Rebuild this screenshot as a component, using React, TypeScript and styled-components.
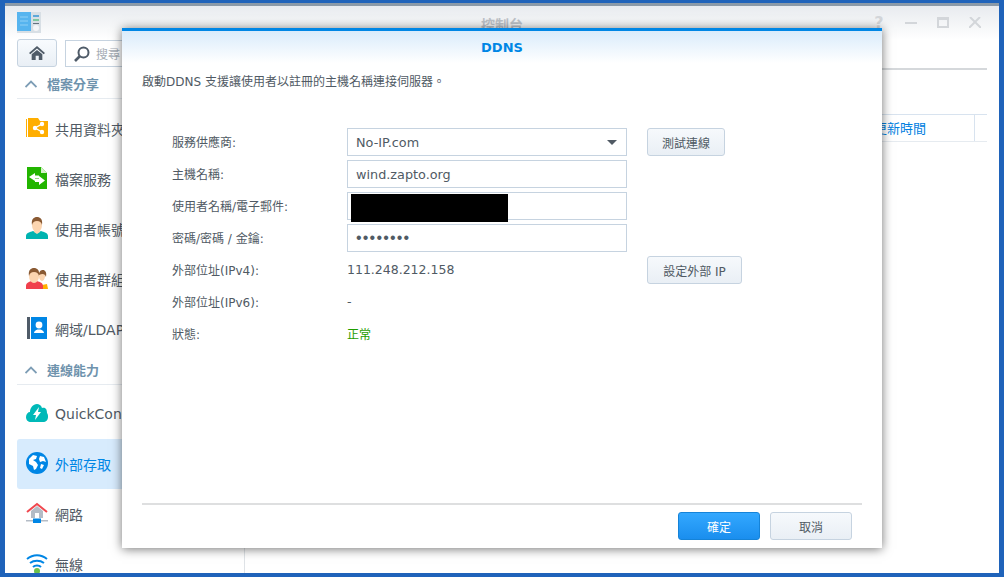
import React from "react";
import styled, { createGlobalStyle } from "styled-components";

const FONT = `"DejaVu Sans", "Noto Sans CJK TC", sans-serif`;

const GlobalStyle = createGlobalStyle`
	html, body {
		margin: 0;
		padding: 0;
		height: 100%;
		overflow: hidden;
	}
	* {
		box-sizing: border-box;
	}
`;

const Desktop = styled.div`
	position: relative;
	width: 1004px;
	height: 577px;
	padding: 3px 5px 4px;
	background-color: #1f63ba;
	font-family: ${FONT};
	font-size: 13px;
	color: #505a64;
`;

const Window = styled.div`
	display: flex;
	flex-direction: column;
	height: 100%;
	overflow: hidden;
	border-top: 3px solid #8b9aa8;
	background: linear-gradient(#e8ebef 0, #ffffff 34px);
`;

const TitleBar = styled.div`
	display: grid;
	grid-template-columns: 1fr auto 1fr;
	align-items: center;
	flex: none;
	height: 33px;
	padding: 0 18px 0 12px;
`;

const WindowTitle = styled.div`
	margin-left: 6px;
	padding-top: 2px;
	font-size: 14px;
	font-weight: 700;
	color: #bcc1c7;
`;

const Controls = styled.div`
	display: flex;
	justify-content: flex-end;
	align-items: center;
	gap: 20px;
	color: #d3d6da;
`;

const HelpMark = styled.span`
	width: 12px;
	font-size: 16px;
	font-weight: 700;
	line-height: 14px;
	text-align: center;
`;

const Body = styled.div`
	display: flex;
	flex: 1;
	min-height: 0;
`;

const Sidebar = styled.div`
	flex: none;
	width: 240px;
	padding: 0 12px;
	border-right: 1px solid #dfe3e7;
`;

const Toolbar = styled.div`
	display: flex;
	gap: 8px;
	height: 28px;
`;

const HomeButton = styled.div`
	display: flex;
	align-items: center;
	justify-content: center;
	flex: none;
	width: 40px;
	border: 1px solid #c6d3e0;
	border-radius: 3px;
	background: linear-gradient(#f8fbfe, #e9eff5);
`;

const SearchBox = styled.div`
	display: flex;
	align-items: center;
	gap: 6px;
	flex: 1;
	margin-top: 1px;
	padding-left: 8px;
	border: 1px solid #c6d3e0;
	background: #fff;
	font-size: 12px;
	color: #a6adb5;
`;

const SectionHeader = styled.div<{ $top: number }>`
	display: flex;
	align-items: center;
	gap: 10px;
	height: 28px;
	margin-top: ${(props) => props.$top}px;
	padding: 0 0 2px 8px;
	border-bottom: 1px solid #e6ebf0;
	font-weight: 700;
	color: #6f93ad;
`;

const NavList = styled.div<{ $top: number }>`
	display: flex;
	flex-direction: column;
	margin-top: ${(props) => props.$top}px;
`;

const NavItem = styled.div<{ $active?: boolean }>`
	display: flex;
	align-items: center;
	gap: 7px;
	height: 50px;
	padding-left: 9px;
	border-radius: 3px;
	font-size: 14px;
	white-space: nowrap;
	overflow: hidden;
	color: ${(props) => (props.$active ? "#0086e5" : "#505a64")};
	background: ${(props) => (props.$active ? "#d7ebfd" : "transparent")};
`;

const Main = styled.div`
	flex: 1;
	margin-right: 12px;
`;

const Tabs = styled.div`
	height: 31px;
	border-bottom: 2px solid #d5d8db;
`;

const TableHead = styled.div`
	display: flex;
	justify-content: flex-end;
	height: 28px;
	margin-top: 44px;
	border-top: 1px solid #d8e3ef;
	border-bottom: 1px solid #e6ebf0;
	color: #0080df;
`;

const HeadCell = styled.div`
	display: flex;
	align-items: center;
	width: 102px;
	padding: 0 0 2px 1px;
	border-right: 1px solid #d8e3ef;
`;

const HeadEnd = styled.div`
	width: 12px;
`;

const Dialog = styled.div`
	position: absolute;
	top: 28px;
	left: 122px;
	display: flex;
	flex-direction: column;
	width: 760px;
	height: 520px;
	border-top: 3px solid #0086e5;
	background: #fff;
	box-shadow: 0 1px 10px rgba(0, 0, 0, 0.55);
`;

const DialogHeader = styled.div`
	display: flex;
	align-items: center;
	justify-content: center;
	flex: none;
	height: 32px;
	background: linear-gradient(#d9ebfb, #ffffff);
	font-weight: 700;
	color: #0086e5;
`;

const DialogBody = styled.div`
	flex: 1;
	padding: 10px 20px 0;
`;

const Description = styled.div`
	line-height: 18px;
	font-size: 12px;
`;

const Form = styled.div`
	display: grid;
	grid-template-columns: 175px 280px auto;
	grid-auto-rows: 28px;
	row-gap: 4px;
	align-items: center;
	justify-items: start;
	margin-top: 37px;
	padding-left: 30px;
`;

const Label = styled.div`
	grid-column: 1;
	padding-bottom: 2px;
	font-size: 12px;
`;

const Field = styled.div`
	position: relative;
	display: flex;
	align-items: center;
	justify-content: space-between;
	width: 100%;
	height: 100%;
	padding: 0 9px 0 8px;
	border: 1px solid #c6d3e0;
	background: #fff;
	font-size: 12.8px;
`;

const Redaction = styled.div`
	position: absolute;
	top: 1px;
	left: 3px;
	width: 157px;
	height: 28px;
	background: #000;
`;

const Secret = styled.span`
	font-family: "Liberation Sans", sans-serif;
	font-size: 16px;
	letter-spacing: 1.2px;
`;

const Caret = styled.span`
	width: 0;
	height: 0;
	border-left: 5px solid transparent;
	border-right: 5px solid transparent;
	border-top: 5px solid #505a64;
`;

const Value = styled.div<{ $ok?: boolean }>`
	grid-column: 2;
	padding-bottom: 2px;
	font-size: ${(props) => (props.$ok ? 12 : 12.5)}px;
	color: ${(props) => (props.$ok ? "#1f9d00" : "#505a64")};
`;

const Button = styled.div<{ $primary?: boolean; $width: number }>`
	display: flex;
	align-items: center;
	justify-content: center;
	width: ${(props) => props.$width}px;
	height: 28px;
	border: 1px solid ${(props) => (props.$primary ? "#1583d8" : "#c6d3e0")};
	border-radius: 3px;
	font-size: 12px;
	color: ${(props) => (props.$primary ? "#fff" : "#505a64")};
	background: ${(props) =>
		props.$primary
			? "linear-gradient(#33a8ff, #1a8eee)"
			: "linear-gradient(#f6f9fc, #e9eff5)"};
`;

const SideButton = styled(Button)`
	grid-column: 3;
	margin-left: 20px;
`;

const DialogFooter = styled.div`
	display: flex;
	justify-content: flex-end;
	gap: 10px;
	flex: none;
	height: 45px;
	margin: 0 20px;
	padding: 7px 10px 0;
	border-top: 2px solid #dedfe0;
`;

const Icon = styled.svg`
	flex: none;
	width: 22px;
	height: 22px;
	margin-bottom: 2px;
`;

const FolderIcon = () => (
	<Icon viewBox="0 0 22 22">
		<path d="M0 2h1v18H0z" fill="#ffae00" />
		<path d="M2 20V1h10l2 3h8v16z" fill="#ffae00" />
		<path
			d="M9 11l7-4M9 11l7 4"
			stroke="#fff"
			strokeWidth="1.4"
			fill="none"
		/>
		<circle cx="9" cy="11" r="2.2" fill="#fff" />
		<circle cx="16" cy="7" r="2.2" fill="#fff" />
		<circle cx="16" cy="15" r="2.2" fill="#fff" />
	</Icon>
);

const FileIcon = () => (
	<Icon viewBox="0 0 22 22">
		<path d="M1 0h14l6 6v16H1z" fill="#22b500" />
		<path d="M15 0l6 6h-6z" fill="#d4f2c8" />
		<path d="M9 6L3 10l6 4v-2.600h4V8.600H9z" fill="#fff" />
		<path d="M13 9l6 4.500L13 18v-3H9v-3h4z" fill="#fff" />
	</Icon>
);

const UserIcon = () => (
	<Icon viewBox="0 0 22 22">
		<path d="M0 22v-3c0-3 4-4 7-5l4 2 4-2c3 1 7 2 7 5v3z" fill="#00b3b0" />
		<path d="M8 12h6v3l-3 2-3-2z" fill="#fcd5b0" />
		<ellipse cx="11" cy="8" rx="5" ry="7" fill="#fcd5b0" />
		<path d="M6 8C5 2 8 0 11 0s6 2 5 8c-1-3-2-4-5-4S7 5 6 8z" fill="#8a5a33" />
	</Icon>
);

const GroupIcon = () => (
	<Icon viewBox="0 0 22 22">
		<path d="M16 22v-4l5-1 1 5z" fill="#ffae00" />
		<ellipse cx="16" cy="9" rx="3" ry="5" fill="#fcd5b0" />
		<path d="M13 8c0-4 2-5 4-5s4 2 3 7c-1-3-3-4-7-2z" fill="#8a5a33" />
		<path d="M0 22v-3c0-3 3-4 5-5l3 1 3-1c3 1 6 2 6 5v3z" fill="#f0404c" />
		<ellipse cx="8" cy="9" rx="5" ry="7" fill="#fcd5b0" />
		<path d="M3 9C2 3 5 1 8 1s6 2 5 8c-1-3-2-4-5-4S4 6 3 9z" fill="#8a5a33" />
	</Icon>
);

const DirectoryIcon = () => (
	<Icon viewBox="0 0 22 22">
		<path d="M1 0h3v22H1z" fill="#4f5b68" />
		<path d="M5 0h16v22H5z" fill="#0086e5" />
		<circle cx="13" cy="8" r="3.400" fill="#fff" />
		<path d="M8 16c0-2 2-3 3.500-3.500h3C16 13 18 14 18 16z" fill="#fff" />
	</Icon>
);

const CloudIcon = () => (
	<Icon viewBox="0 0 22 22">
		<path
			d="M5 20C2 20 0 18 0 15s2-5 4-5c0-4 3-8 7-8 2 0 4 1 5 4 4-1 5 2 5 5 1 1 1 3 1 4 0 3-2 5-5 5z"
			fill="#00b9b8"
		/>
		<path d="M13 5l-6 8h3l-1 5 6-8h-3z" fill="#fff" />
	</Icon>
);

const GlobeIcon = () => (
	<Icon viewBox="0 0 22 22">
		<circle cx="11" cy="11" r="11" fill="#0086e5" />
		<path d="M3 7l4-4 4 1-1 3-3 1 3 2 2 3-2 4-2 1-1-4-4-2z" fill="#fff" />
		<path d="M14 4l4 1 2 5-3-1-3 1-1-3zM15 12l3 1-2 4-2-1z" fill="#fff" />
	</Icon>
);

const NetworkIcon = () => (
	<Icon viewBox="0 0 22 22">
		<path d="M5 9l6-5 6 5v7H5z" fill="#b4bcc6" />
		<path d="M9 11h4v5H9z" fill="#fff" />
		<path d="M1 10l10-8 10 8" stroke="#f0484f" strokeWidth="2" fill="none" />
		<path d="M0 18h22v1.500H0z" fill="#b4bcc6" />
		<path d="M7 16.500h8V21H7z" fill="#0086e5" />
	</Icon>
);

const WifiIcon = () => (
	<Icon viewBox="0 0 22 22">
		<path
			d="M1 7c6-5 14-5 20 0M4 11c4-3 10-3 14 0M7 15c2-2 6-2 8 0"
			stroke="#0086e5"
			strokeWidth="2"
			fill="none"
		/>
		<circle cx="11" cy="19" r="3" fill="#6cc04a" />
	</Icon>
);

const HomeGlyph = () => (
	<svg width="16" height="16" viewBox="0 0 18 16">
		<path d="M9 0L0 8l1.500 1.500L9 3l7.500 6.500L18 8z" fill="#4f5b68" />
		<path d="M3 9.500L9 4.500l6 5V16h-4v-5H7.500v5H3z" fill="#4f5b68" />
	</svg>
);

const SearchGlyph = () => (
	<svg width="16" height="16" viewBox="0 0 16 16">
		<circle cx="9.500" cy="6.500" r="5" stroke="#4f5b68" strokeWidth="2" fill="none" />
		<path d="M6 10l-5 5" stroke="#4f5b68" strokeWidth="2.600" />
	</svg>
);

const ChevronGlyph = () => (
	<svg width="12" height="8" viewBox="0 0 12 8">
		<path d="M0.500 7L6 1.500 11.500 7" stroke="#7d9db5" strokeWidth="1.800" fill="none" />
	</svg>
);

const MinimizeGlyph = () => (
	<svg width="12" height="12" viewBox="0 0 12 12">
		<path d="M0 5h12v2H0z" fill="currentColor" />
	</svg>
);

const MaximizeGlyph = () => (
	<svg width="12" height="11" viewBox="0 0 12 11">
		<path d="M0 0h12v11H0zM2 3v6h8V3z" fill="currentColor" fillRule="evenodd" />
	</svg>
);

const CloseGlyph = () => (
	<svg width="12" height="11" viewBox="0 0 12 11">
		<path d="M1 0l11 11M11 0L0 11" stroke="currentColor" strokeWidth="2" />
	</svg>
);

const AppLogo = () => (
	<svg width="24" height="21" viewBox="0 0 24 21">
		<path d="M0 0h24v21H0z" fill="#d8dfe5" />
		<path d="M0 0h14v19H0z" fill="#56b4ef" />
		<path d="M3 5h8M3 9h8M3 13h8" stroke="#8fd0f6" />
		<path d="M16 3h6v2h-6z" fill="#5fa8d8" />
		<path d="M16 7h6v2h-6z" fill="#7fc8a0" />
		<path d="M16 11h6v1h-6z" fill="#66727e" />
		<circle cx="19" cy="16" r="3" fill="#f4f6f8" />
	</svg>
);

const firstGroup = [
	{ icon: <FolderIcon />, name: "共用資料夾" },
	{ icon: <FileIcon />, name: "檔案服務" },
	{ icon: <UserIcon />, name: "使用者帳號" },
	{ icon: <GroupIcon />, name: "使用者群組" },
	{ icon: <DirectoryIcon />, name: "網域/LDAP" },
];

const secondGroup = [
	{ icon: <CloudIcon />, name: "QuickConnect" },
	{ icon: <GlobeIcon />, name: "外部存取", active: true },
	{ icon: <NetworkIcon />, name: "網路" },
	{ icon: <WifiIcon />, name: "無線" },
];

export default function App() {
	return (
		<Desktop>
			<GlobalStyle />
			<Window>
				<TitleBar>
					<AppLogo />
					<WindowTitle>控制台</WindowTitle>
					<Controls>
						<HelpMark>?</HelpMark>
						<MinimizeGlyph />
						<MaximizeGlyph />
						<CloseGlyph />
					</Controls>
				</TitleBar>
				<Body>
					<Sidebar>
						<Toolbar>
							<HomeButton>
								<HomeGlyph />
							</HomeButton>
							<SearchBox>
								<SearchGlyph />
								搜尋
							</SearchBox>
						</Toolbar>
						<SectionHeader $top={4}>
							<ChevronGlyph />
							檔案分享
						</SectionHeader>
						<NavList $top={5}>
							{firstGroup.map((item) => (
								<NavItem key={item.name}>
									{item.icon}
									{item.name}
								</NavItem>
							))}
						</NavList>
						<SectionHeader $top={3}>
							<ChevronGlyph />
							連線能力
						</SectionHeader>
						<NavList $top={4}>
							{secondGroup.map((item) => (
								<NavItem key={item.name} $active={item.active}>
									{item.icon}
									{item.name}
								</NavItem>
							))}
						</NavList>
					</Sidebar>
					<Main>
						<Tabs />
						<TableHead>
							<HeadCell>更新時間</HeadCell>
							<HeadEnd />
						</TableHead>
					</Main>
				</Body>
			</Window>
			<Dialog>
				<DialogHeader>DDNS</DialogHeader>
				<DialogBody>
					<Description>啟動DDNS 支援讓使用者以註冊的主機名稱連接伺服器。</Description>
					<Form>
						<Label>服務供應商:</Label>
						<Field>
							No-IP.com
							<Caret />
						</Field>
						<SideButton $width={78}>測試連線</SideButton>
						<Label>主機名稱:</Label>
						<Field>wind.zapto.org</Field>
						<Label>使用者名稱/電子郵件:</Label>
						<Field>
							<Redaction />
						</Field>
						<Label>密碼/密碼 / 金鑰:</Label>
						<Field>
							<Secret>••••••••</Secret>
						</Field>
						<Label>外部位址(IPv4):</Label>
						<Value>111.248.212.158</Value>
						<SideButton $width={95}>設定外部 IP</SideButton>
						<Label>外部位址(IPv6):</Label>
						<Value>-</Value>
						<Label>狀態:</Label>
						<Value $ok>正常</Value>
					</Form>
				</DialogBody>
				<DialogFooter>
					<Button $primary $width={82}>
						確定
					</Button>
					<Button $width={82}>取消</Button>
				</DialogFooter>
			</Dialog>
		</Desktop>
	);
}
